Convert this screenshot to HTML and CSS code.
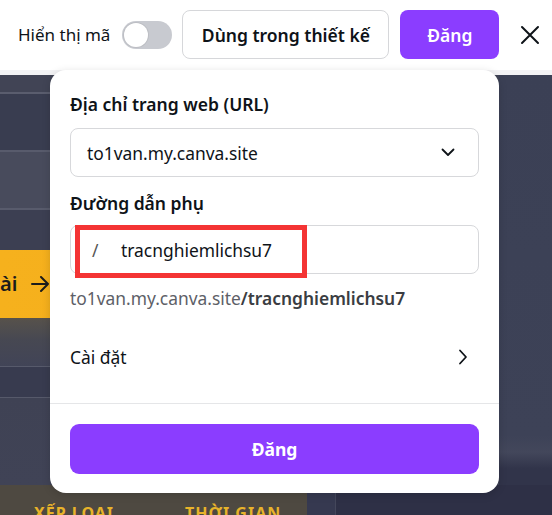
FILE: index.html
```html
<!DOCTYPE html>
<html lang="vi">
<head>
<meta charset="utf-8">
<title>Đăng</title>
<link rel="stylesheet" href="styles.css">
</head>
<body>
<header class="topbar">
  <span class="show-code">Hiển thị mã</span>
  <span class="toggle"><span class="knob"></span></span>
  <button class="btn btn-outline">Dùng trong thiết kế</button>
  <button class="btn btn-primary">Đăng</button>
  <span class="close">
    <svg width="20" height="20" viewBox="0 0 20 20"><path d="M2 2 L18 18 M18 2 L2 18" stroke="#0e1318" stroke-width="2" stroke-linecap="round" fill="none"/></svg>
  </span>
</header>
<main class="stage">
  <div class="upper">
    <div class="rows">
      <div class="row r1"></div>
      <div class="row r2"></div>
      <div class="row r3"></div>
      <div class="row r4"></div>
      <div class="row cta"><span class="cta-text">ài</span>
        <svg width="19" height="16" viewBox="0 0 19 16"><path d="M1 8 H17 M10 1 L17 8 L10 15" stroke="#1c1c1c" stroke-width="2" fill="none" stroke-linecap="round" stroke-linejoin="round"/></svg>
      </div>
      <div class="row r5"></div>
      <div class="row r6"></div>
      <div class="row r7"></div>
    </div>
    <div class="side"></div>
  </div>
  <div class="table-head">
    <div class="th-cells"><span class="th1">XẾP LOẠI</span><span class="th2">THỜI GIAN</span></div>
    <div class="th-gap"></div>
    <div class="th-dark"></div>
  </div>

  <section class="popup">
    <div class="popup-body">
      <div class="field-label">Địa chỉ trang web (URL)</div>
      <div class="select">
        <span>to1van.my.canva.site</span>
        <svg width="14" height="9" viewBox="0 0 14 9"><path d="M1.5 1.5 L7 7 L12.5 1.5" stroke="#0e1318" stroke-width="1.8" fill="none" stroke-linecap="round" stroke-linejoin="round"/></svg>
      </div>
      <div class="field-label label-2">Đường dẫn phụ</div>
      <div class="input">
        <span class="slash">/</span>
        <span class="path">tracnghiemlichsu7</span>
        <span class="highlight"></span>
      </div>
      <div class="helper">to1van.my.canva.site<b>/tracnghiemlichsu7</b></div>
    </div>
    <div class="settings">
      <span>Cài đặt</span>
      <svg width="10" height="16" viewBox="0 0 10 16"><path d="M2 1.5 L8 8 L2 14.5" stroke="#0e1318" stroke-width="1.8" fill="none" stroke-linecap="round" stroke-linejoin="round"/></svg>
    </div>
    <div class="popup-foot">
      <button class="btn-publish">Đăng</button>
    </div>
  </section>
</main>
</body>
</html>
```

FILE: styles.css
```css
* { box-sizing: border-box; }
html, body { margin: 0; padding: 0; }
body {
  width: 552px;
  height: 515px;
  overflow: hidden;
  font-family: "Noto Sans", "Open Sans", sans-serif;
  color: #0e1318;
  background: #3b3f52;
}

.topbar {
  height: 75px;
  background: #fff;
  border-bottom: 5px solid #f3f3f5;
  display: flex;
  align-items: center;
  padding: 0 0 1px 18px;
}
.show-code { font-size: 17px; margin-right: 12px; }
.toggle {
  width: 50px; height: 28px; border-radius: 14px;
  background: #c8cad0;
  display: flex; align-items: center; padding-left: 2px;
  margin-right: 10px;
  flex: none;
}
.knob {
  width: 24px; height: 24px; border-radius: 50%;
  background: #fff;
  box-shadow: 0 0 0 1px rgba(0,0,0,0.06);
}
.btn {
  font-family: inherit;
  font-size: 17.5px;
  font-weight: 600;
  height: 49px;
  border-radius: 8px;
  cursor: pointer;
  flex: none;
  padding: 0;
}
.btn-outline {
  width: 207px;
  background: #fff;
  color: #0e1318;
  border: 1px solid #d6d7da;
  margin-right: 11px;
}
.btn-primary {
  width: 99px;
  background: #8b3dff;
  color: #fff;
  border: none;
  margin-right: 21px;
}
.close { display: flex; width: 20px; height: 20px; flex: none; }

.stage {
  position: relative;
  height: 440px;
}
.upper { display: flex; height: 410px; }
.rows { flex: 1; display: flex; flex-direction: column; }
.side {
  width: 53px;
  background: linear-gradient(180deg, #3b4055 0%, #3d4257 88%, #43475b 92%, #31344a 96%);
}
.row { flex: none; }
.r1 { height: 19px; background: #414455; border-bottom: 2px solid #5a5d6e; }
.r2 { height: 58px; background: #393d50; border-bottom: 2px solid #585b6c; }
.r3 { height: 58px; background: #484b5c; border-bottom: 2px solid #585b6c; }
.r4 { height: 40px; background: #3c3f52; }
.cta {
  height: 68px;
  background: linear-gradient(90deg, #f6b11d 0%, #f3aa1b 100%);
  display: flex; align-items: center; gap: 14px;
  font-size: 20px; font-weight: 600; color: #1c1c1c;
}
.cta-text { line-height: 1; }
.r5 { height: 49px; background: linear-gradient(180deg, #57524b 0%, #474852 45%, #414457 100%); border-bottom: 1px solid #575a6b; }
.r6 { height: 31px; background: #383b4f; border-bottom: 1px solid #56596a; }
.r7 { height: 87px; background: linear-gradient(180deg, #3f4254, #404356); }

.table-head { display: flex; height: 30px; overflow: hidden; }
.th-cells {
  width: 307px;
  background: #4e4941;
  padding: 17px 0 0 34px;
  display: flex;
  gap: 71px;
  font-weight: 700;
  font-size: 16px;
  line-height: 22px;
  letter-spacing: 1px;
  color: #e8b32a;
}
.th-gap { width: 29px; background: #363950; border-right: 1px solid #44475b; }
.th-dark { flex: 1; background: #2e3046; }

.popup {
  position: absolute;
  top: -5px;
  left: 50px;
  width: 449px;
  height: 423px;
  background: #fff;
  border-radius: 16px;
  box-shadow: 0 2px 8px rgba(0,0,0,0.15);
  display: flex;
  flex-direction: column;
}
.popup-body { padding: 22px 20px 0; }
.field-label { font-size: 17.5px; font-weight: 600; line-height: 24px; }
.select {
  margin-top: 12px;
  height: 49px;
  border: 1px solid #d7d8db;
  border-radius: 8px;
  display: flex; align-items: center; justify-content: space-between;
  padding: 0 23px 0 16px;
  font-size: 17.4px;
}
.label-2 { margin-top: 14px; }
.input {
  position: relative;
  margin-top: 10px;
  height: 49px;
  border: 1px solid #d7d8db;
  border-radius: 8px;
  display: flex; align-items: center;
  padding-left: 21px;
  font-size: 17.4px;
}
.slash { color: #555; width: 29px; }
.highlight {
  position: absolute;
  left: 4px; top: -1px;
  width: 232px; height: 53px;
  border: 5px solid #f43434;
}
.helper {
  margin-top: 12px;
  font-size: 17.4px;
  line-height: 24px;
  color: #5d6067;
}
.helper b { color: #3a3d42; font-weight: 600; }
.settings {
  height: 94px;
  padding: 0 31px 0 20px;
  display: flex; align-items: center; justify-content: space-between;
  font-size: 17.4px;
  border-bottom: 1px solid #e5e6e8;
  flex: none;
}
.popup-foot { padding: 20px 20px 19px; }
.btn-publish {
  width: 100%;
  height: 50px;
  border: none;
  border-radius: 9px;
  background: #8b3dff;
  color: #fff;
  font-family: inherit;
  font-size: 17.5px;
  font-weight: 700;
}
```
